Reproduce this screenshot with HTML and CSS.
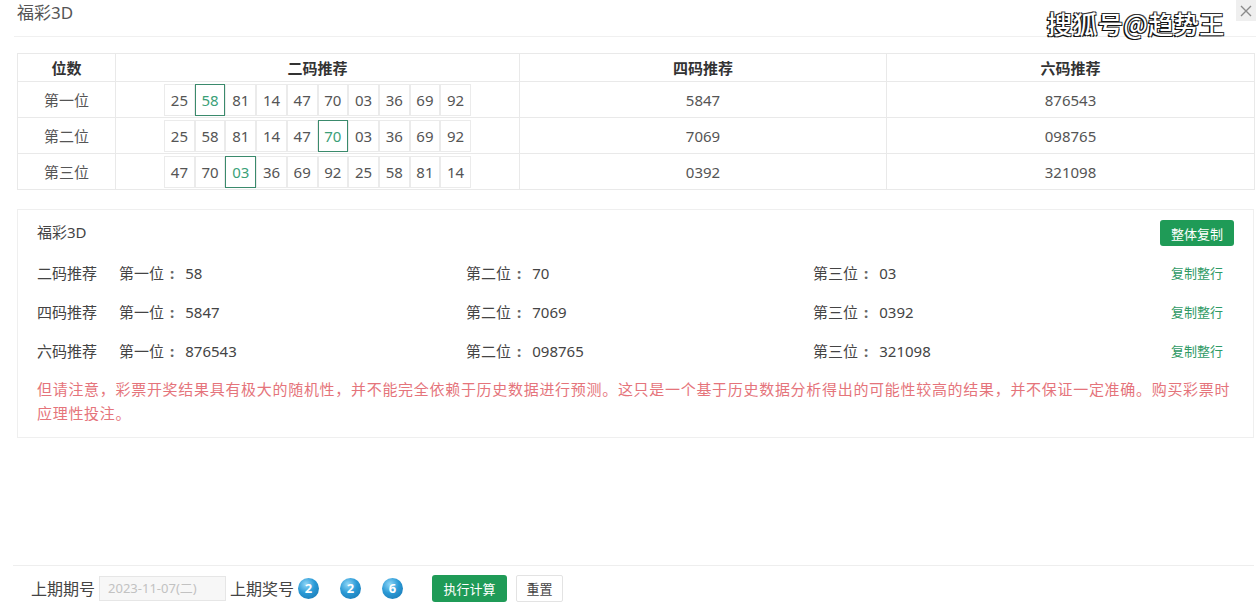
FILE: index.html
```html
<!DOCTYPE html>
<html lang="zh-CN">
<head>
  <meta charset="UTF-8" />
  <meta name="viewport" content="width=device-width, initial-scale=1.0"/>
  <title>福彩3D</title>
  <link rel="stylesheet" href="styles.css">
</head>
<body>

  <div class="dialog">
    <header class="dialog-head">
      <span class="dialog-title">福彩3D</span>
      <button class="close-btn" title="关闭">
        <svg width="12" height="12" viewBox="0 0 12 12"><path d="M1 1 L11 11 M11 1 L1 11" stroke="#8a8a8a" stroke-width="1.4" fill="none"/></svg>
      </button>
    </header>

    <!-- watermark stamp over the header -->
    <div class="watermark">搜狐号@趋势王</div>

    <section class="dialog-body">
      <table class="rec-table">
        <colgroup>
          <col class="col-pos"><col class="col-two"><col class="col-four"><col class="col-six">
        </colgroup>
        <thead>
          <tr><th>位数</th><th>二码推荐</th><th>四码推荐</th><th>六码推荐</th></tr>
        </thead>
        <tbody>
          <tr>
            <td>第一位</td>
            <td>
              <div class="num-group">
                <span class="num">25</span><span class="num on">58</span><span class="num">81</span><span class="num">14</span><span class="num">47</span><span class="num">70</span><span class="num">03</span><span class="num">36</span><span class="num">69</span><span class="num">92</span>
              </div>
            </td>
            <td>5847</td>
            <td>876543</td>
          </tr>
          <tr>
            <td>第二位</td>
            <td>
              <div class="num-group">
                <span class="num">25</span><span class="num">58</span><span class="num">81</span><span class="num">14</span><span class="num">47</span><span class="num on">70</span><span class="num">03</span><span class="num">36</span><span class="num">69</span><span class="num">92</span>
              </div>
            </td>
            <td>7069</td>
            <td>098765</td>
          </tr>
          <tr>
            <td>第三位</td>
            <td>
              <div class="num-group">
                <span class="num">47</span><span class="num">70</span><span class="num on">03</span><span class="num">36</span><span class="num">69</span><span class="num">92</span><span class="num">25</span><span class="num">58</span><span class="num">81</span><span class="num">14</span>
              </div>
            </td>
            <td>0392</td>
            <td>321098</td>
          </tr>
        </tbody>
      </table>

      <div class="summary">
        <div class="summary-head">
          <span>福彩3D</span>
          <button class="btn-green copy-all">整体复制</button>
        </div>
        <div class="summary-rows">
          <span class="row-label">二码推荐</span>
          <span>第一位<span class="colon">:</span>58</span>
          <span>第二位<span class="colon">:</span>70</span>
          <span>第三位<span class="colon">:</span>03</span>
          <a class="copy-row" href="#">复制整行</a>

          <span class="row-label">四码推荐</span>
          <span>第一位<span class="colon">:</span>5847</span>
          <span>第二位<span class="colon">:</span>7069</span>
          <span>第三位<span class="colon">:</span>0392</span>
          <a class="copy-row" href="#">复制整行</a>

          <span class="row-label">六码推荐</span>
          <span>第一位<span class="colon">:</span>876543</span>
          <span>第二位<span class="colon">:</span>098765</span>
          <span>第三位<span class="colon">:</span>321098</span>
          <a class="copy-row" href="#">复制整行</a>
        </div>
        <p class="warning">但请注意，彩票开奖结果具有极大的随机性，并不能完全依赖于历史数据进行预测。这只是一个基于历史数据分析得出的可能性较高的结果，并不保证一定准确。购买彩票时应理性投注。</p>
      </div>
    </section>

    <footer class="dialog-foot">
      <span class="foot-label">上期期号</span>
      <input class="issue-input" type="text" placeholder="2023-11-07(二)" disabled />
      <span class="foot-label">上期奖号</span>
      <div class="balls">
        <span class="ball">2</span>
        <span class="ball">2</span>
        <span class="ball">6</span>
      </div>
      <button class="btn-green run-btn">执行计算</button>
      <button class="reset-btn">重置</button>
    </footer>
  </div>

</body>
</html>
```

FILE: styles.css
```css
body {
  font-family: "Noto Sans", "Noto Sans CJK SC", sans-serif;
  margin: 0;
  background: #fff;
  color: #555;
}

.dialog {
  position: relative;
  height: 616px;
  display: flex;
  flex-direction: column;
}

.dialog-head {
  height: 36px;
  display: flex;
  justify-content: space-between;
  align-items: flex-start;
  margin-left: 14px;
  padding-left: 3px;
  border-bottom: 1px solid #f0f0f0;
}

.dialog-title {
  font-size: 17px;
  line-height: 26px;
  color: #555;
}

.close-btn {
  width: 20px;
  height: 21px;
  padding: 0;
  border: none;
  background: #efefef;
  display: flex;
  align-items: center;
  justify-content: center;
  cursor: pointer;
}

.watermark {
  position: absolute;
  left: 1047px;
  top: 5px;
  font-family: "Noto Sans CJK SC", sans-serif;
  font-size: 25px;
  font-weight: 500;
  letter-spacing: 0.5px;
  color: #fff;
  text-shadow: -1.5px 1px 0 #111, 1px 1px 0 #222, -1px -1px 0 #333, 1px -1px 0 #444;
}

.dialog-body {
  padding: 16px 2px 0 17px;
}

/* recommendation table */
.rec-table {
  width: 1237px;
  border-collapse: collapse;
  table-layout: fixed;
  font-size: 15px;
}

.col-pos { width: 98px; }
.col-two { width: 404px; }
.col-four { width: 367px; }
.col-six { width: 368px; }

.rec-table th,
.rec-table td {
  border: 1px solid #e9e9e9;
  text-align: center;
  padding: 0;
}

.rec-table th {
  height: 27px;
  color: #333;
  font-weight: bold;
}

.rec-table td {
  height: 35px;
  color: #555;
}

.num-group {
  display: flex;
  justify-content: center;
}

.num {
  width: 30.7px;
  height: 32px;
  box-sizing: border-box;
  border: 1px solid #ebebeb;
  display: flex;
  align-items: center;
  justify-content: center;
  color: #555;
}

.num.on {
  border-color: #3a8a6c;
  color: #3b9f78;
}

/* copy summary */
.summary {
  margin-top: 19px;
  width: 1237px;
  box-sizing: border-box;
  border: 1px solid #efefef;
  padding: 10px 19px 12px 19px;
  font-size: 15px;
}

.summary-head {
  display: flex;
  justify-content: space-between;
  align-items: center;
  height: 26px;
  color: #444;
}

.summary-head span {
  margin-top: -3px;
}

.btn-green {
  background: #1f9b57;
  color: #fff;
  border: none;
  border-radius: 3px;
  font-family: inherit;
  font-size: 13px;
  cursor: pointer;
}

.copy-all {
  width: 74px;
  height: 26px;
  padding: 0;
}

.summary-rows {
  margin-top: 7px;
  display: grid;
  grid-template-columns: 82px 347px 347px 347px 1fr;
  grid-auto-rows: 39px;
  align-items: center;
  color: #444;
}

.colon {
  margin: 0 11px 0 6px;
  font-weight: bold;
  color: #666;
}

.copy-row {
  text-align: center;
  font-size: 13px;
  color: #2f9a66;
  text-decoration: none;
}

.warning {
  margin: 7px 0 0;
  font-size: 15px;
  letter-spacing: 0.7px;
  line-height: 24px;
  color: #e5747b;
}

/* bottom bar */
.dialog-foot {
  margin: auto 2px 0 13px;
  height: 51px;
  box-sizing: border-box;
  border-top: 1px solid #eeeeee;
  display: flex;
  align-items: center;
  padding: 0 0 6px 18px;
  font-size: 16px;
  color: #444;
}

.issue-input {
  width: 127px;
  height: 25px;
  box-sizing: border-box;
  margin: 0 4px;
  border: 1px solid #e6e6e6;
  background: #f7f7f7;
  font-family: inherit;
  font-size: 13px;
  padding: 0 8px;
}

.issue-input::placeholder {
  color: #c2c2c2;
}

.balls {
  display: flex;
  gap: 21px;
  margin-left: 4px;
}

.ball {
  width: 21px;
  height: 21px;
  border-radius: 50%;
  background: radial-gradient(circle at 38% 30%, #8fd6f7 0%, #2b9ad6 45%, #1672ad 100%);
  color: #fff;
  font-size: 13px;
  font-weight: bold;
  display: flex;
  align-items: center;
  justify-content: center;
}

.run-btn {
  margin-left: 29px;
  width: 75px;
  height: 27px;
  padding: 0;
}

.reset-btn {
  margin-left: 9px;
  width: 47px;
  height: 27px;
  padding: 0;
  background: #fff;
  border: 1px solid #e3e3e3;
  border-radius: 2px;
  font-family: inherit;
  font-size: 13px;
  color: #444;
  cursor: pointer;
}
```
